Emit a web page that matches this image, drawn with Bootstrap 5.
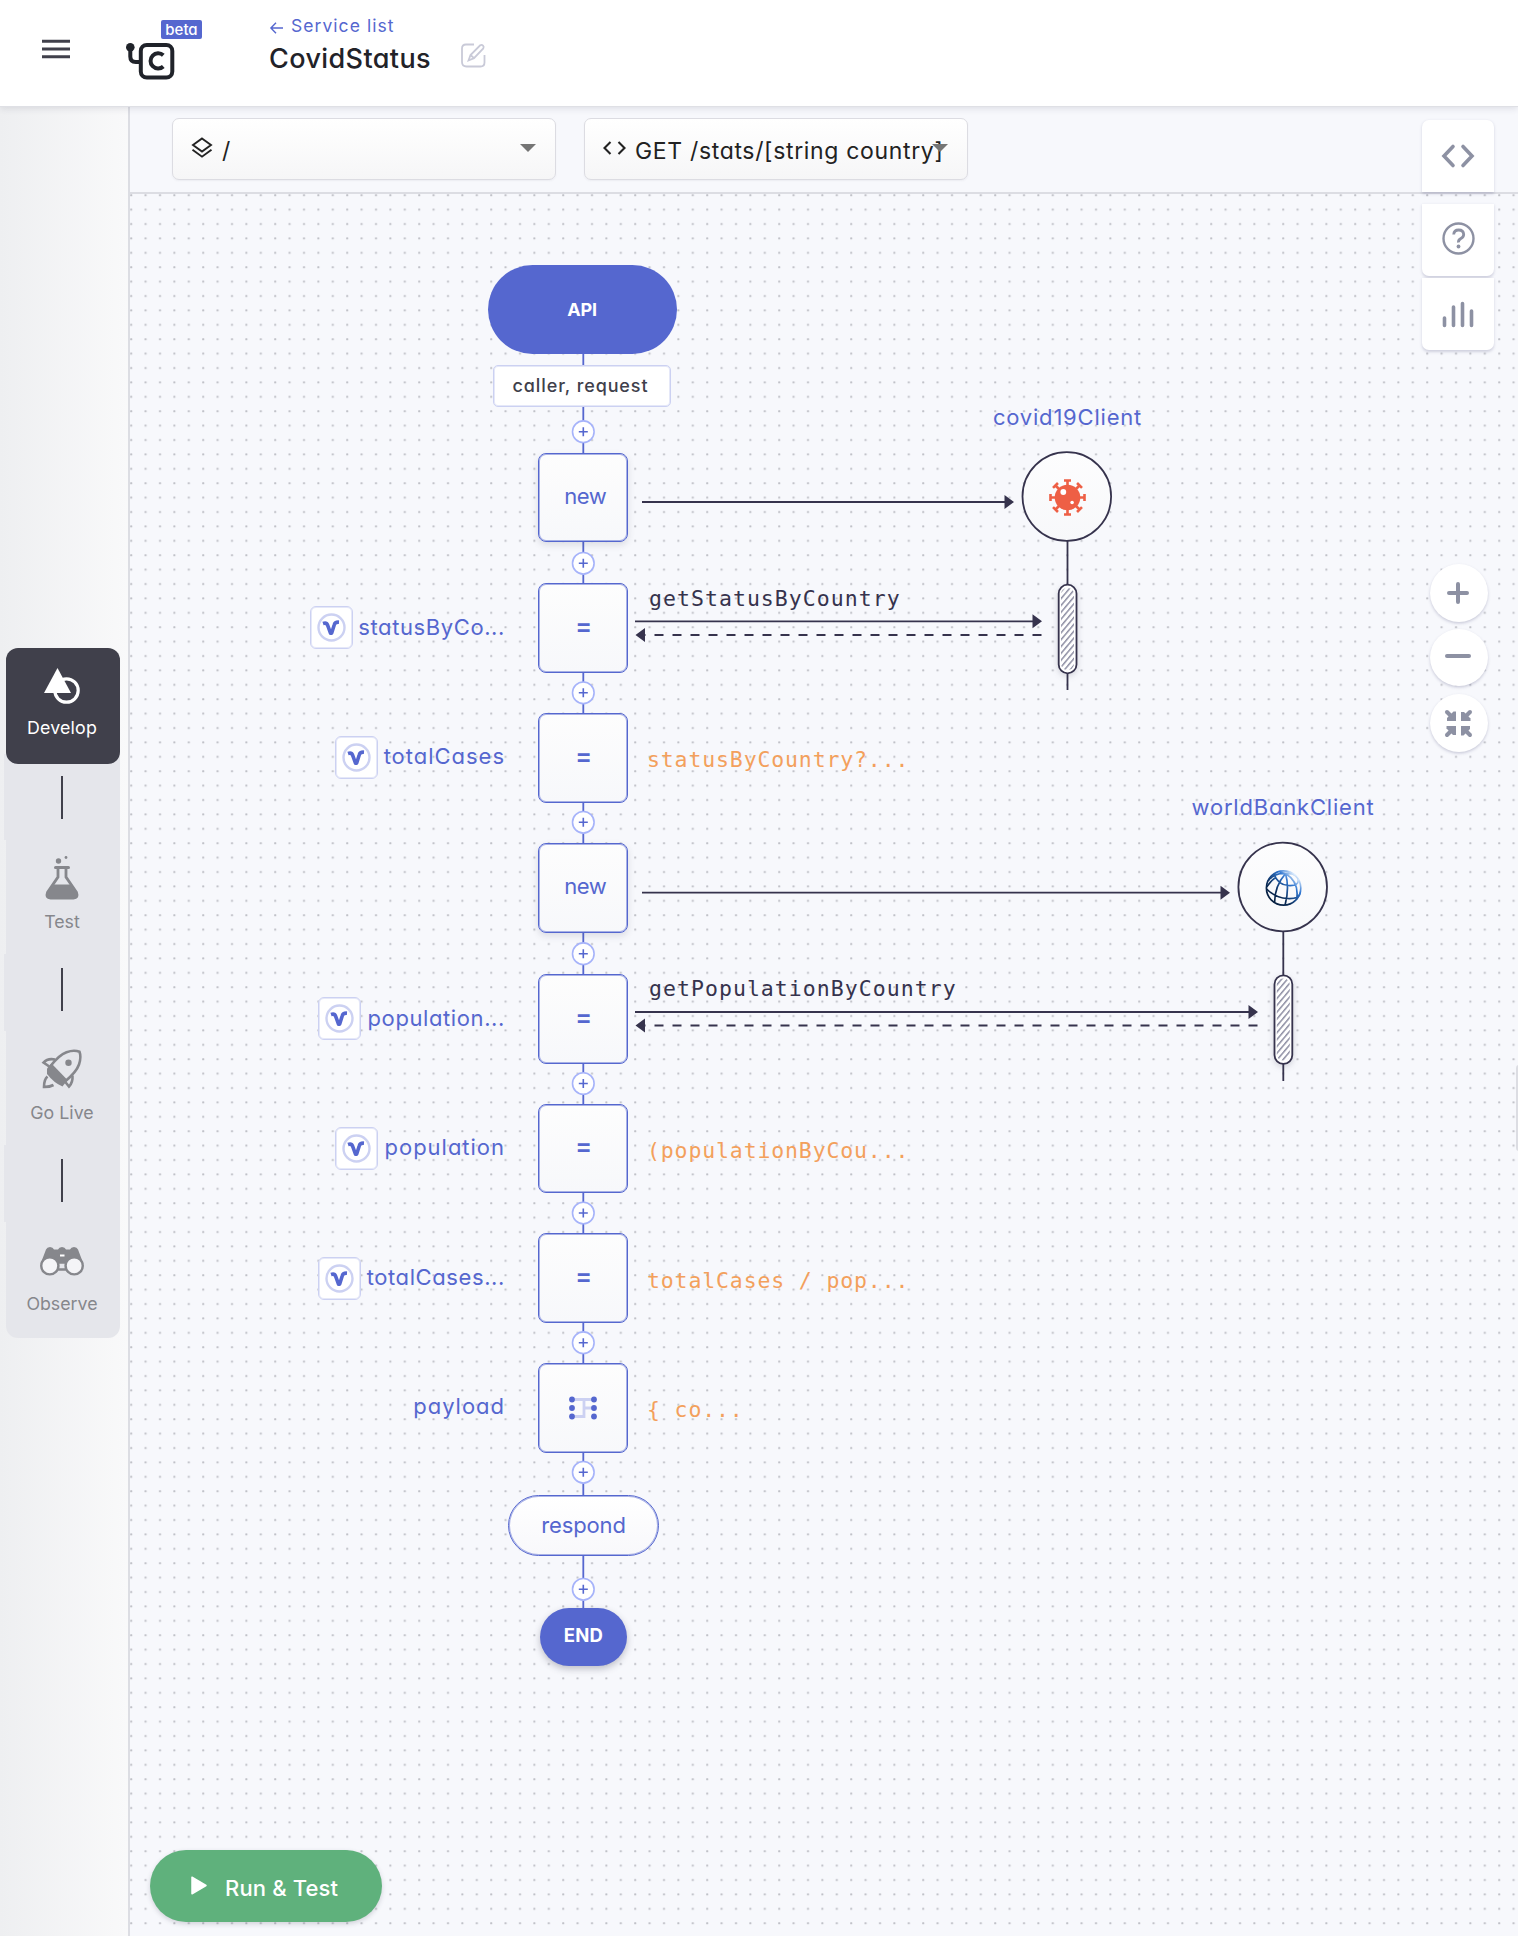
<!DOCTYPE html>
<html lang="en">
<head>
<meta charset="utf-8">
<title>CovidStatus</title>
<meta name="viewport" content="width=device-width, initial-scale=1">
<link href="https://cdn.jsdelivr.net/npm/bootstrap@5.3.0/dist/css/bootstrap.min.css" rel="stylesheet">
<style>
:root{--brand:#5567cf;--ink:#222228;--slate:#40404b;--arrow:#36334d;--line:#dcdde3;--muted:#8d91a3}
body{font-family:Inter,"Liberation Sans",sans-serif;font-feature-settings:"cv11";width:1518px;height:1936px;overflow:hidden;background:#f7f8fc;color:var(--ink)}
svg{display:block;overflow:visible}
.topbar{height:107px;border-bottom:1px solid #dfe0e5;box-shadow:0 2px 6px rgba(60,60,80,.12);z-index:5;padding-left:42px}
.burger{width:28px;margin-top:39px}
.brand{width:49px;margin:42px 0 0 56px}
.brand .beta-tag{left:35px;top:-22px;height:19px;width:41px;border-radius:2px;background:var(--brand);color:#fff;font-size:15px;line-height:19px;text-align:center;font-weight:500}
.crumbs{margin:13px 0 0 95px}
.crumbs a{font-size:17.5px;line-height:26px;color:var(--brand);letter-spacing:1.05px}
.crumbs h1{font-size:27px;line-height:36px;font-weight:500;margin:2px 0 0 -1px;color:#222228;letter-spacing:.4px}
.ico-edit{margin:4px 0 0 30px}
.side{width:130px;border-right:2px solid var(--line);background:linear-gradient(90deg,#eeeff1,#f9f9fa);padding-top:541px}
.steps{width:114px;margin-left:6px}
.step{height:114px;background:#e5e6eb;color:#86878c;font-size:17.8px}
.step.active{height:116px;background:var(--slate);color:#fff;border-radius:12px;position:relative;z-index:1}
.step.last{height:116px;border-radius:0 0 12px 12px}
.step .pic{height:60px;padding-top:20px;margin-left:-3px}
.step .name{line-height:24px;margin-top:10px;margin-left:-2px}
.step.active .name{margin-top:8px;letter-spacing:.18px}
.gap-bar{height:77px;margin-left:-2px;background:#e5e6eb;padding:14px 0 0 57px}
.gap-bar.first{margin-top:-10px;padding-top:22px;height:86px}
.gap-bar i{display:block;width:2px;height:43px;background:var(--slate)}
.tools{height:87px;border-bottom:2px solid var(--line);padding:11px 0 0 42px;gap:28px;background:#f7f8fc}
.picker{width:384px;height:62px;border:1.500px solid #dcdce2;border-radius:7px;background:linear-gradient(#fff,#f6f6f7);box-shadow:0 1px 2px rgba(60,60,80,.06);color:#222;padding-left:18px}
.picker .txt{font-size:23px;line-height:30px;white-space:nowrap;letter-spacing:.66px;margin:4px 0 0 9px}
.caret{right:19px;top:25px;border:8px solid transparent;border-top:8px solid #757575;border-bottom:0}
.canvas{overflow:hidden}
.layer{position:absolute;left:-130px;top:-194px;width:1518px;height:1936px}
.layer>*{position:absolute}
.node{left:538px;width:89.500px;height:89.500px;border:1px solid var(--brand);border-radius:8px;background:linear-gradient(#fdfdfd,#f7f8fb);box-shadow:inset 0 0 0 1px rgba(85,103,207,.5);color:var(--brand);font-size:22px;display:flex;align-items:center;justify-content:center}
.node.fresh{box-shadow:inset 0 0 0 1px rgba(85,103,207,.5),0 3px 7px rgba(60,60,80,.14);padding:0 0 2px 5px;letter-spacing:-.45px}
.node.assign{font-weight:600;font-size:25px;padding:0 0 3px 2px}
.lbl{right:1013px;color:var(--brand);font-size:22px;line-height:30px;white-space:nowrap;letter-spacing:.98px}
.lbl.cut{letter-spacing:.6px}
.cli{color:var(--brand);font-size:22px;line-height:30px;white-space:nowrap;transform:translateX(-50%);letter-spacing:.8px}
.mono{font-family:"DejaVu Sans Mono",monospace;font-size:21.500px;line-height:30px;white-space:pre;letter-spacing:1.040px;color:var(--arrow)}
.expr{left:647px;color:#f3a05c;letter-spacing:.86px}
.chip{width:43px;height:43px;border:1.500px solid #ccd1f2;border-radius:6px;background:#fff;box-shadow:inset 0 0 0 1px rgba(204,209,242,.5)}
.pillfill{background:var(--brand);color:#fff;border-radius:50px;font-weight:700;display:flex;align-items:center;justify-content:center}
.params{left:493px;top:364.500px;width:178px;height:42.500px;border:1.500px solid #ccd1f2;box-shadow:inset 0 0 0 1px rgba(204,209,242,.5);border-radius:5px;background:#fff;color:var(--slate);font-weight:500;font-size:18px;line-height:39px;text-align:center;letter-spacing:.88px;padding-right:3px}
.respond{left:508px;top:1495px;width:151px;height:61px;border:1px solid var(--brand);box-shadow:inset 0 0 0 1px rgba(85,103,207,.5);border-radius:31px;background:linear-gradient(#fff,#f8f8fb);color:var(--brand);font-size:22px;line-height:58px;text-align:center;letter-spacing:-.15px}
.tool{left:1422px;width:72px;height:72px;background:#fff;box-shadow:0 1.500px 3px rgba(70,70,120,.22);display:flex;align-items:center;justify-content:center;z-index:6}
.zoomer{left:1430px;width:58px;height:58px;border-radius:50%;background:#fff;box-shadow:0 1.500px 3px rgba(70,70,120,.25);display:flex;align-items:center;justify-content:center;padding-right:2px}
.run{left:150px;top:1850px;width:232px;height:72px;border-radius:36px;background:#5fb17c;color:#fff;font-size:22px;font-weight:500;line-height:30px;box-shadow:0 2px 5px rgba(60,60,80,.2);padding-left:41px;letter-spacing:.15px}
.run svg{margin-top:-2px}
.run span{margin:4px 0 0 18px}
.handle{left:1516px;top:1065px;width:4px;height:86px;border-radius:3px 0 0 3px;background:#dcdde3}
</style>
<script src="https://cdn.jsdelivr.net/npm/bootstrap@5.3.0/dist/js/bootstrap.bundle.min.js"></script>
</head>
<body class="d-flex flex-column">
<svg width="0" height="0" class="position-absolute">
 <defs>
  <pattern id="dots" width="14.4" height="14.4" patternUnits="userSpaceOnUse" x="130" y="194"><rect x=".2" y=".2" width="2" height="2" rx=".4" fill="#bcbdc4"/></pattern>
  <pattern id="hatch" width="4.4" height="5" patternUnits="userSpaceOnUse" patternTransform="rotate(40)"><rect width="1.5" height="5" fill="#8d8ea3"/></pattern>
  <linearGradient id="disc" x1="0" y1="0" x2="0" y2="1"><stop offset="0" stop-color="#fdfdfe"/><stop offset="1" stop-color="#f7f8fa"/></linearGradient>
  <linearGradient id="globe" x1="0" y1="1" x2="1" y2="0"><stop offset="0" stop-color="#04172f"/><stop offset=".35" stop-color="#0a2b57"/><stop offset=".68" stop-color="#2f76d0"/><stop offset=".88" stop-color="#e4f1ff"/><stop offset="1" stop-color="#fff"/></linearGradient>
  <g id="plus"><circle r="10.8" fill="#fff" stroke="#a6b3fa" stroke-width="1.6"/><path d="M-4.5 0h9M0-4.5v9" stroke="#5567cf" stroke-width="1.6"/></g>
  <g id="vee" fill="none"><circle cx="20.500" cy="20.500" r="13" stroke="#ccd1f2" stroke-width="2.4"/><path d="M12 16.500c2.400-.8 3.900-.2 4.600 1.600l2.900 8h1.200l2.500-8.200c.6-2.200 2-2.900 4.800-2.700" stroke="#5567cf" stroke-width="3.600" stroke-linejoin="round"/></g>
 </defs>
</svg>

<header class="topbar bg-white d-flex align-items-start position-relative flex-shrink-0">
 <svg class="burger" height="21" viewBox="0 0 28 21"><path d="M0 2.200h28M0 10h28M0 17.800h28" stroke="#40404b" stroke-width="3"/></svg>
 <div class="brand position-relative">
  <svg width="49" height="38" viewBox="0 0 49 38" fill="none" stroke="#20232a"><circle cx="4.300" cy="5.200" r="4.300" fill="#20232a" stroke="none"/><path d="M4.300 5v9.500q0 5.500 5.500 5.500H14" stroke-width="4"/><rect x="14.800" y="3" width="31.500" height="32.500" rx="6" stroke-width="4"/><path d="M37.300 13.300a7.600 7.600 0 1 0 0 11.200" stroke-width="4"/></svg>
  <span class="beta-tag position-absolute">beta</span>
 </div>
 <div class="crumbs">
  <a href="#" class="text-decoration-none d-flex align-items-center"><svg width="13" height="12" viewBox="0 0 13 12" class="mt-1" fill="none" stroke="#5567cf" stroke-width="1.400"><path d="M13 6H1M6 .8.900 6 6 11.200"/></svg><span class="ps-1 ms-1 me-0">Service list</span></a>
  <div class="d-flex"><h1>CovidStatus</h1>
  <svg class="ico-edit" width="25" height="25" viewBox="0 0 25 25" fill="none" stroke="#c9cad8" stroke-width="1.800"><path d="M13 1.500H5Q1 1.500 1 5.500V19q0 4.500 4.500 4.500h14q4 0 4-4V12"/><path d="M7.500 17.500l2-5.500L19.200 2.300q1.600-1 2.800.3t.3 2.800L13 15.200zM9.500 12l3.500 3.200"/></svg></div>
 </div>
</header>

<div class="d-flex flex-grow-1">
 <aside class="side flex-shrink-0">
  <nav class="steps">
   <div class="step active text-center"><div class="pic"><svg class="mx-auto" width="36" height="36" viewBox="0 0 36 36"><circle cx="22.500" cy="22.500" r="11.700" fill="none" stroke="#fff" stroke-width="3.200"/><path d="M13.500 0L27 25H0z" fill="#fff"/></svg></div><div class="name">Develop</div></div>
   <div class="gap-bar first"><i></i></div>
   <div class="step text-center"><div class="pic" style="padding-top:16px"><svg class="mx-auto" width="34" height="44" viewBox="0 0 34 44"><circle cx="13.500" cy="5" r="2.700" fill="#86878c"/><circle cx="21" cy="1.500" r="1.400" fill="#86878c"/><path d="M10.500 11.500h13" stroke="#86878c" stroke-width="3" stroke-linecap="round"/><path d="M13 12v9L2.500 36.500Q.5 42 5.500 42h23q5 0 3-5.500L21 21v-9" fill="none" stroke="#86878c" stroke-width="2.800"/><path d="M8 28.500h18l6 9q1 5-4 5H6q-5 0-4-5z" fill="#86878c"/></svg></div><div class="name">Test</div></div>
   <div class="gap-bar"><i></i></div>
   <div class="step text-center"><div class="pic" style="padding-top:18px"><svg class="mx-auto" width="40" height="40" viewBox="0 0 40 40" fill="none" stroke="#86878c" stroke-width="2.600"><path d="M8.500 17Q17 6 24.500 3.200T37.500 2.800Q39.500 8 37 15.500T22.500 33"/><path d="M5 19.500l4.500-5 16 16.500-5 6.500Q12 34 5 25z" fill="#86878c" stroke="none"/><circle cx="26.500" cy="13.700" r="3.200" fill="#86878c" stroke="none"/><path d="M13 10.500Q5.500 9 1.500 13.500L8 18M30.500 26.500q.5 7-3.500 11L22.500 32M5.500 27.500q-3.500 3-3.500 10.500 6 0 9.500-2"/></svg></div><div class="name">Go Live</div></div>
   <div class="gap-bar"><i></i></div>
   <div class="step last text-center"><div class="pic" style="padding-top:25px"><svg class="mx-auto" width="44" height="29" viewBox="0 0 44 29"><path d="M6 2.500Q7 0 10 0t4 2.500h4q1-2.500 4-2.500t4 2.500h4Q31 0 34 0t4 2.500L43.500 17 34 12 26 17h-8l-8-5L.5 17z" fill="#86878c"/><rect x="20" y="7.500" width="4.500" height="2" fill="#fff"/><path d="M18 15.500h8v7h-8z" fill="#e5e6eb" stroke="#86878c" stroke-width="2.400"/><circle cx="9.800" cy="18.800" r="8.600" fill="#f4f4f7" stroke="#86878c" stroke-width="2.400"/><circle cx="34.200" cy="18.800" r="8.600" fill="#f4f4f7" stroke="#86878c" stroke-width="2.400"/></svg></div><div class="name">Observe</div></div>
  </nav>
 </aside>

 <main class="d-flex flex-column flex-grow-1">
  <div class="tools d-flex flex-shrink-0">
   <div class="picker position-relative d-flex align-items-center"><svg width="22" height="22" viewBox="0 0 22 22" fill="none" stroke="#222" stroke-width="1.900" style="margin-top:-3px"><path d="M11 1.500L20 8l-9 6.500L2 8zM1.500 12.800L11 19.700l9.500-6.900"/></svg><span class="txt">/</span><span class="caret position-absolute"></span></div>
   <div class="picker position-relative d-flex align-items-center"><svg width="23" height="14" viewBox="0 0 23 14" fill="none" stroke="#222" stroke-width="2.100" style="margin-top:-3px"><path d="M7.500 1L1.500 7l6 6M15.500 1l6 6-6 6"/></svg><span class="txt">GET /stats/[string country]</span><span class="caret position-absolute"></span></div>
  </div>

  <section class="canvas position-relative flex-grow-1">
   <div class="layer">
    <svg width="1518" height="1936" viewBox="0 0 1518 1936">
     <rect x="130" y="194" width="1388" height="1742" fill="url(#dots)"/>
     <path d="M583.300 353V1610" stroke="#5567cf" stroke-width="1.800"/>
     <g fill="none" stroke="#36334d" stroke-width="1.800">
      <path d="M642 502h364M635 621.300h400M642 892.700h580M635 1012h615"/>
      <path d="M1041.500 635H640M1257.500 1025.500H640" stroke-dasharray="9 9"/>
      <path d="M1067.500 540v150M1283.300 931v150"/>
      <circle cx="1066.800" cy="496.500" r="44.300" fill="url(#disc)"/><circle cx="1282.700" cy="887" r="44.300" fill="url(#disc)"/>
     </g>
     <path d="M1004.500 495v14l9.500-7zM1032.500 614.300v14l9.500-7zM645 628v14l-9.500-7zM1220.500 885.700v14l9.500-7zM1248.500 1005v14l9.500-7zM645 1018.500v14l-9.500-7z" fill="#36334d"/>
     <g stroke="#36334d" stroke-width="1.800" fill="#fff" style="filter:drop-shadow(0 2px 3px rgba(60,60,80,.2))"><rect x="1058.700" y="584.700" width="17.800" height="88.600" rx="8.900"/><rect x="1274.500" y="975.300" width="17.800" height="88.600" rx="8.900"/></g>
     <rect x="1061" y="588" width="13" height="82" rx="6" fill="url(#hatch)"/><rect x="1276.800" y="978.600" width="13" height="82" rx="6" fill="url(#hatch)"/>
     <g transform="translate(1067.500 497.500)"><circle r="12.800" fill="#ee5f45"/>
      <g stroke="#ee5f45" stroke-width="2.600" fill="none"><path id="spike" d="M0-12v-5M-3.500-17h7"/><use href="#spike" transform="rotate(45)"/><use href="#spike" transform="rotate(90)"/><use href="#spike" transform="rotate(135)"/><use href="#spike" transform="rotate(180)"/><use href="#spike" transform="rotate(225)"/><use href="#spike" transform="rotate(270)"/><use href="#spike" transform="rotate(315)"/></g>
      <circle cx="-4.200" cy="-5.500" r="2.900" fill="#fff"/><circle cx="4.600" cy="5" r="1.800" fill="#fff"/></g>
     <g transform="translate(1283.600 888)" fill="none" stroke="url(#globe)" stroke-width="1.700"><circle r="17.200"/><path d="M2-14.500Q6 0 1.500 17M2-14.500Q-9-2-9 14.500M2-14.500Q16-6 13 11.500M2-14.500Q-10-15-15.500-7M2-14.500q7-.5 10 2M-9.500-14Q-6-3 5-2.500T14.500-9M-17-1Q-12-8-8-10.500M-17 1Q-8 10 4 10.500T16.500 5M-4-16.500q5 3.500 11.500.5"/></g>
     <use href="#plus" x="583.300" y="431.700"/><use href="#plus" x="583.300" y="563.300"/><use href="#plus" x="583.300" y="692.800"/><use href="#plus" x="583.300" y="822.300"/><use href="#plus" x="583.300" y="953.700"/><use href="#plus" x="583.300" y="1083.500"/><use href="#plus" x="583.300" y="1213"/><use href="#plus" x="583.300" y="1342.700"/><use href="#plus" x="583.300" y="1472.300"/><use href="#plus" x="583.300" y="1589.300"/>
    </svg>

    <div class="pillfill" style="left:488px;top:265px;width:189px;height:88.500px;font-size:18px;letter-spacing:-.2px;padding-right:1px">API</div>
    <div class="params">caller, request</div>

    <div class="node fresh" style="top:452.500px">new</div>
    <div class="node assign" style="top:583px">=</div>
    <div class="node assign" style="top:713px">=</div>
    <div class="node fresh" style="top:843px">new</div>
    <div class="node assign" style="top:974px">=</div>
    <div class="node assign" style="top:1103.500px">=</div>
    <div class="node assign" style="top:1233px">=</div>
    <div class="node" style="top:1363px"><svg width="28" height="24" viewBox="0 0 28 24"><path d="M3 3.500h22M3 20.500h12V3.500M15 12h10" fill="none" stroke="#ccd1f2" stroke-width="2.800"/><g fill="#5567cf"><circle cx="3" cy="3.500" r="2.900"/><circle cx="3" cy="12" r="2.900"/><circle cx="3" cy="20.500" r="2.900"/><circle cx="25" cy="3.500" r="2.900"/><circle cx="25" cy="12" r="2.900"/><circle cx="25" cy="20.500" r="2.900"/></g></svg></div>
    <div class="respond">respond</div>
    <div class="pillfill" style="left:540px;top:1608px;width:87px;height:58px;font-size:18.500px;letter-spacing:.25px;padding-bottom:2px;box-shadow:0 3px 7px rgba(60,60,80,.3)">END</div>

    <div class="chip" style="left:309.500px;top:606px"><svg width="40" height="40"><use href="#vee"/></svg></div><div class="lbl cut" style="top:612px">statusByCo...</div>
    <div class="chip" style="left:334.800px;top:736px"><svg width="40" height="40"><use href="#vee"/></svg></div><div class="lbl" style="top:740.500px">totalCases</div>
    <div class="chip" style="left:317.800px;top:997px"><svg width="40" height="40"><use href="#vee"/></svg></div><div class="lbl cut" style="top:1003px">population...</div>
    <div class="chip" style="left:334.800px;top:1126.500px"><svg width="40" height="40"><use href="#vee"/></svg></div><div class="lbl" style="top:1132px">population</div>
    <div class="chip" style="left:317.800px;top:1256.500px"><svg width="40" height="40"><use href="#vee"/></svg></div><div class="lbl cut" style="top:1262px">totalCases...</div>
    <div class="lbl" style="top:1390.500px">payload</div>

    <div class="mono" style="left:649px;top:584px">getStatusByCountry</div>
    <div class="mono expr" style="top:744.500px">statusByCountry?...</div>
    <div class="mono" style="left:649px;top:974px">getPopulationByCountry</div>
    <div class="mono expr" style="top:1136px">(populationByCou...</div>
    <div class="mono expr" style="top:1265.500px">totalCases / pop...</div>
    <div class="mono expr" style="top:1395px">{ co...</div>

    <div class="cli" style="left:1067.500px;top:402px">covid19Client</div>
    <div class="cli" style="left:1283px;top:792px">worldBankClient</div>

    <div class="zoomer" style="top:564px"><svg width="22" height="22"><path d="M2 11h18M11 2v18" stroke="#8d91a3" stroke-width="4" stroke-linecap="round"/></svg></div>
    <div class="zoomer" style="top:629px;height:57px"><svg width="26" height="6" style="margin-top:-3px"><path d="M2 3h22" stroke="#8d91a3" stroke-width="4" stroke-linecap="round"/></svg></div>
    <div class="zoomer" style="top:694px"><svg width="27" height="27" viewBox="-13.500 -13.500 27 27"><g id="q"><path d="M11.500-11.500L5.500-5.500" stroke="#8d91a3" stroke-width="4" stroke-linecap="round"/><path d="M2.500-2.500v-9l3 0L12-5V-2.500z" fill="#8d91a3"/></g><use href="#q" transform="rotate(90)"/><use href="#q" transform="rotate(180)"/><use href="#q" transform="rotate(270)"/></svg></div>
    <div class="run d-flex align-items-center"><svg width="16" height="19" viewBox="0 0 16 19"><path d="M1 1.200v16.600L15 9.500z" fill="#fff" stroke="#fff" stroke-width="1.500" stroke-linejoin="round"/></svg><span>Run &amp; Test</span></div>
    <div class="handle"></div>
   </div>
  </section>
 </main>
</div>

<div class="tool position-absolute" style="top:120px;border-radius:7px 7px 0 0"><svg width="34" height="24" viewBox="0 0 34 24" fill="none" stroke="#8d91a3" stroke-width="3.600" stroke-linecap="round"><path d="M12 2.500L3 12l9 9.500M22 2.500l9 9.500-9 9.500"/></svg></div>
<div class="tool position-absolute" style="top:204px;border-radius:0 0 7px 7px;padding-bottom:4px"><svg width="33" height="33" viewBox="0 0 33 33" fill="none" stroke="#8d91a3"><circle cx="16.500" cy="16.500" r="15" stroke-width="2.400"/><path d="M11.700 12.500q.3-4.500 5-4.500t5 4.300q0 2.700-2.800 4.200t-2.400 4" stroke-width="2.800"/><circle cx="16.500" cy="24.500" r="1.900" fill="#8d91a3" stroke="none"/></svg></div>
<div class="tool position-absolute" style="top:278px;border-radius:0 0 7px 7px"><svg width="32" height="27" viewBox="0 0 32 27" stroke="#8d91a3" stroke-width="3.600" stroke-linecap="round"><path d="M2.500 17v7.500M11.500 6v18.500M20.500 2.500v22M29.500 10v14.500"/></svg></div>
</body>
</html>
